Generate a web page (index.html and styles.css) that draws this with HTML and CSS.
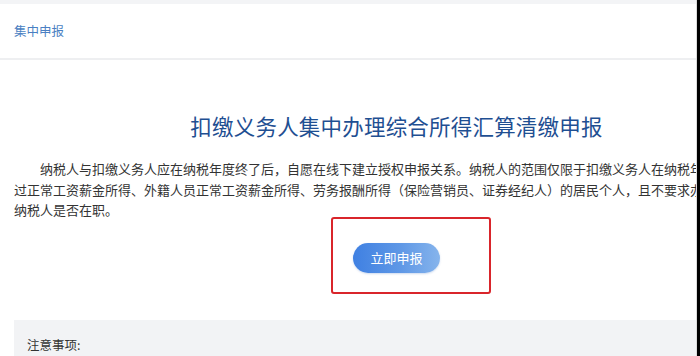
FILE: index.html
```html
<!DOCTYPE html>
<html lang="zh-CN">
<head>
<meta charset="utf-8">
<title>集中申报</title>
<link rel="stylesheet" href="styles.css">
</head>
<body>
<div class="page">
  <div class="topstrip"></div>
  <header class="header"><span class="crumb">集中申报</span></header>
  <main class="content">
    <h1 class="title">扣缴义务人集中办理综合所得汇算清缴申报</h1>
    <p class="intro"><span class="first">纳税人与扣缴义务人应在纳税年度终了后，自愿在线下建立授权申报关系。纳税人的范围仅限于扣缴义务人在纳税年度内通过</span><br>过正常工资薪金所得、外籍人员正常工资薪金所得、劳务报酬所得（保险营销员、证券经纪人）的居民个人，且不要求办理年度汇算时<br>纳税人是否在职。</p>
    <div class="action">
      <button class="btn" type="button">立即申报</button>
      <div class="highlight"></div>
    </div>
    <section class="notes">
      <div class="notes-title">注意事项:</div>
    </section>
  </main>
</div>
</body>
</html>
```

FILE: styles.css
```css
html, body {
  margin: 0;
  padding: 0;
  background: #000;
  height: 356px;
  overflow: hidden;
}
body {
  font-family: "Noto Sans CJK SC", "Noto Sans", sans-serif;
  color: #333;
}
.page {
  width: 696px;
  height: 356px;
  background: #fff;
  border-right: 1px solid #dcdcdc;
  overflow: hidden;
}
.topstrip {
  height: 4px;
  background: #f3f4f6;
}
.header {
  height: 54px;
  border-bottom: 2px solid #eeeff1;
  display: flex;
  align-items: center;
  padding-left: 14px;
}
.crumb {
  font-size: 12.5px;
  color: #4a7fc2;
  line-height: 18px;
}
.content {
  width: 793px;
}
.title {
  margin: 0;
  padding-top: 50px;
  font-size: 21.5px;
  font-weight: 400;
  line-height: 32px;
  text-align: center;
  color: #1f4f92;
  letter-spacing: 0.2px;
}
.intro {
  margin: 17px 0 0;
  padding-left: 14px;
  font-size: 13px;
  line-height: 20.5px;
  color: #333;
  white-space: nowrap;
}
.first {
  padding-left: 26px;
}
.action {
  position: relative;
  padding-top: 22px;
  display: flex;
  justify-content: center;
}
.btn {
  width: 87px;
  height: 30px;
  border: none;
  border-radius: 15px;
  background: linear-gradient(90deg, #3f80e2 0%, #5f98e6 55%, #86b4ec 100%);
  box-shadow: 0 1px 2px rgba(60, 110, 190, 0.25);
  color: #fff;
  font-family: "Noto Sans CJK SC", "Noto Sans", sans-serif;
  font-size: 13px;
  padding: 0;
}
.highlight {
  position: absolute;
  left: 331px;
  top: -4px;
  width: 156px;
  height: 73px;
  border: 2px solid #d9252b;
  border-radius: 3px;
}
.notes {
  margin: 47px 0 0 14px;
  background: #f2f3f5;
  height: 80px;
  padding: 16px 0 0 13px;
}
.notes-title {
  font-size: 12.5px;
  line-height: 18px;
  color: #333;
}
```
